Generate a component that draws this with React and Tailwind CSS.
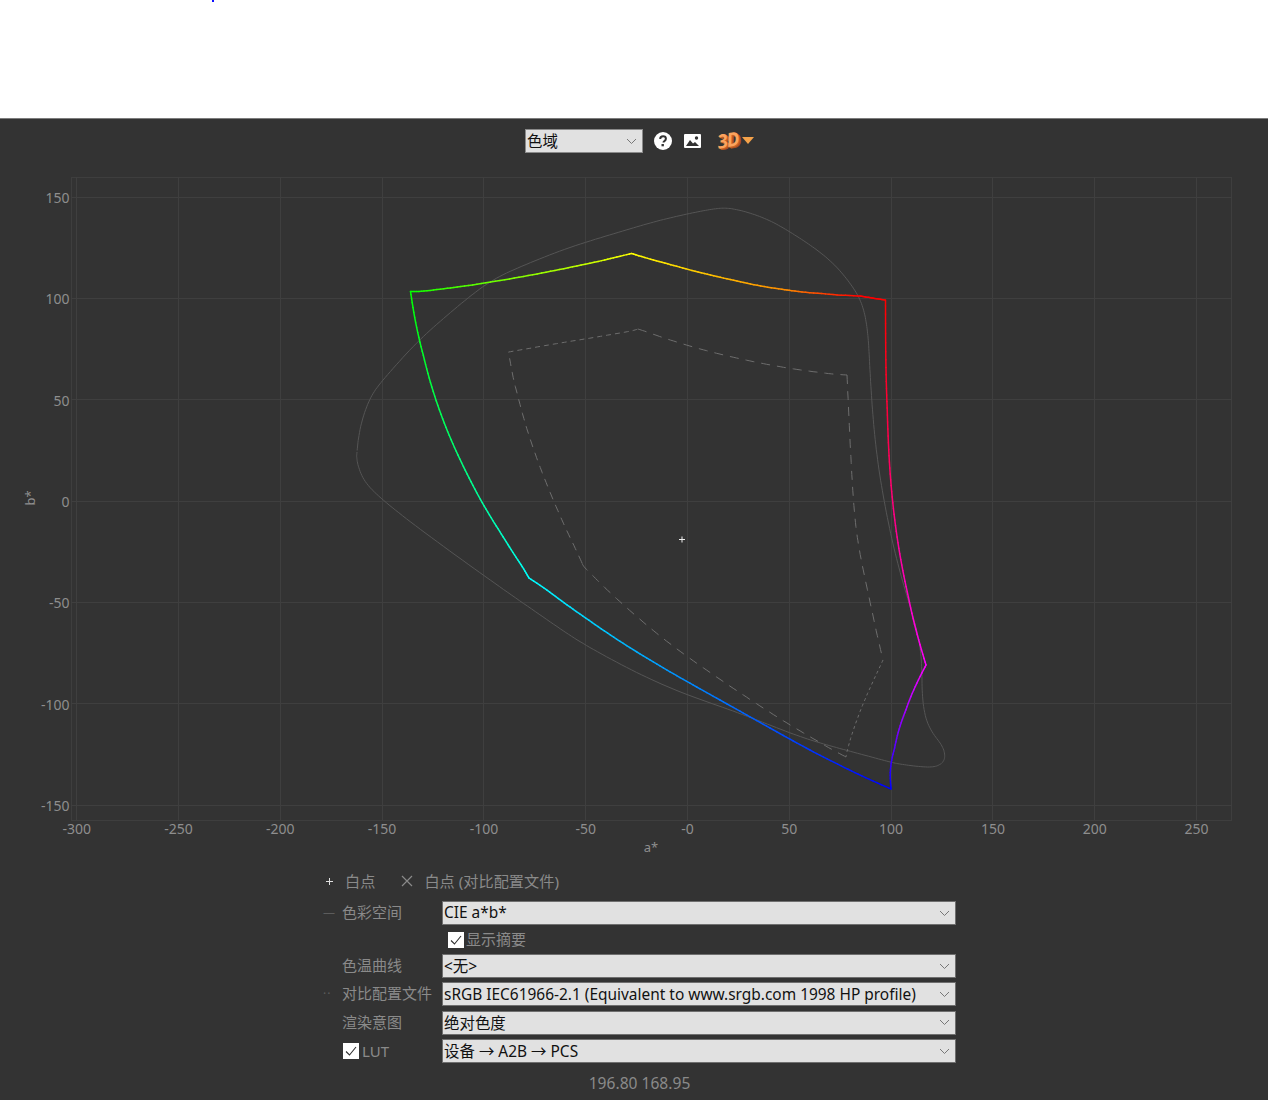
import React from "react";

const FONT = "font-['Noto_Sans','Noto_Sans_CJK_SC',sans-serif]";

const xTicks = [-300, -250, -200, -150, -100, -50, 0, 50, 100, 150, 200, 250];
const yTicks = [150, 100, 50, 0, -50, -100, -150];
const toX = (a) => 687.5 + a * 2.036;
const toY = (b) => 501.2 - b * 2.026;
const crisp = (v) => Math.floor(v) + 0.5;

// catmull-rom, sampled so every little piece can get its own colour
const spline = (pts, closed = false) => {
  const out = [];
  const n = pts.length;
  const get = (i) =>
    closed ? pts[(i + n) % n] : pts[Math.max(0, Math.min(n - 1, i))];
  const last = closed ? n : n - 1;
  for (let i = 0; i < last; i++) {
    const [p0, p1, p2, p3] = [get(i - 1), get(i), get(i + 1), get(i + 2)];
    for (let s = 0; s < 10; s++) {
      const t = s / 10;
      const t2 = t * t;
      const t3 = t2 * t;
      out.push(
        [0, 1].map(
          (k) =>
            0.5 *
            (2 * p1[k] +
              (p2[k] - p0[k]) * t +
              (2 * p0[k] - 5 * p1[k] + 4 * p2[k] - p3[k]) * t2 +
              (3 * p1[k] - p0[k] - 3 * p2[k] + p3[k]) * t3)
        )
      );
    }
  }
  out.push(closed ? pts[0] : pts[n - 1]);
  return out;
};

// moving average over the samples, the control points were read off by eye
const smooth = (line, r = 10, closed = false) => {
  const n = line.length;
  return line.map((_, i) => {
    const w = closed ? r : Math.min(r, i, n - 1 - i);
    let x = 0;
    let y = 0;
    for (let j = -w; j <= w; j++) {
      const p = line[(i + j + n) % n];
      x += p[0];
      y += p[1];
    }
    return [x / (2 * w + 1), y / (2 * w + 1)];
  });
};

const toPath = (pts) =>
  pts.map((p, i) => `${i ? "L" : "M"}${p[0].toFixed(1)} ${p[1].toFixed(1)}`).join(" ");

const Edge = ({ pts, from, to }) => {
  const line = smooth(spline(pts), 14);
  return line.slice(1).map((p, i) => {
    const t = i / (line.length - 2);
    const c = from.map((v, k) => Math.round(v + (to[k] - v) * t));
    return (
      <line
        key={i}
        x1={line[i][0]}
        y1={line[i][1]}
        x2={p[0]}
        y2={p[1]}
        stroke={`rgb(${c.join(",")})`}
        strokeWidth="1.5"
        strokeLinecap="round"
      />
    );
  });
};

const RED = [255, 0, 0];
const GREEN = [0, 255, 0];
const BLUE = [0, 0, 255];
const YELLOW = [255, 255, 0];
const ORANGE = [255, 140, 0];
const CYAN = [0, 255, 255];
const MAGENTA = [255, 0, 255];

const outer = [
  [357, 453], [360, 427], [370, 398], [383, 380], [417, 342], [450, 313],
  [487, 283], [520, 267], [570, 247], [620, 232], [653, 222], [687, 214],
  [713, 209], [727, 208], [743, 211], [767, 219], [790, 232], [813, 247],
  [833, 263], [850, 283], [862, 303], [867, 327], [869, 350], [871, 390],
  [875, 440], [882, 490], [893, 545], [905, 590], [917, 630], [922, 663],
  [922, 697], [928, 727], [941, 743], [945.5, 757], [940, 765], [927, 767.5],
  [900, 764], [890, 762], [853, 752], [820, 743], [787, 732], [737, 712],
  [687, 695], [637, 673], [587, 646], [562, 630], [523, 603], [483, 575],
  [417, 527], [383, 500], [363, 480], [357, 460],
];

const dashed = [
  { pts: [[508.5, 352], [540, 346.5], [580, 339.5], [623, 333], [638, 329]], dash: "5 4" },
  { pts: [[638, 329], [653, 334], [687, 346], [720, 354], [753, 362], [787, 368], [820, 373], [847, 375]], dash: "9 7" },
  { pts: [[847, 375], [850, 440], [853, 500], [857, 540], [863, 568], [873, 617], [883, 660]], dash: "9 7" },
  { pts: [[883, 660], [870, 688], [857, 717], [848, 747], [846, 757]], dash: "3 3" },
  { pts: [[846, 757], [820, 743], [787, 723], [753, 702], [720, 679], [687, 657], [653, 631], [620, 602], [588, 572], [582, 563]], dash: "9 7" },
  { pts: [[582, 563], [570, 537], [550, 495], [530, 440], [517, 397], [508.5, 352]], dash: "8 6" },
];

const Chart = () => (
  <svg viewBox="0 170 1268 695" className="block w-full h-[695px]">
    <rect x="71.5" y="177.5" width="1160" height="643" fill="none" stroke="#3e3e3e" />
    {xTicks.map((a) => (
      <g key={a}>
        <line x1={crisp(toX(a))} x2={crisp(toX(a))} y1="177" y2="820" stroke="#3f3f3f" />
        <text x={toX(a)} y="834" textAnchor="middle" fontSize="14" fill="#8e8e8e">
          {a === 0 ? "-0" : a}
        </text>
      </g>
    ))}
    {yTicks.map((b) => (
      <g key={b}>
        <line x1="71" x2="1232" y1={crisp(toY(b))} y2={crisp(toY(b))} stroke="#3f3f3f" />
        <text x="69.5" y={toY(b) + 5.8} textAnchor="end" fontSize="14" fill="#8e8e8e">
          {b}
        </text>
      </g>
    ))}
    <text x="651" y="852" textAnchor="middle" fontSize="13" fill="#8e8e8e">a*</text>
    <text
      transform="translate(35 498) rotate(-90)"
      textAnchor="middle"
      fontSize="13"
      fill="#8e8e8e"
    >
      b*
    </text>

    <path d={toPath(smooth(spline(outer, true), 6, true))} fill="none" stroke="#555" strokeWidth="1" />
    {dashed.map((d, i) => (
      <path
        key={i}
        d={toPath(smooth(spline(d.pts), 10))}
        fill="none"
        stroke="#6e6e6e"
        strokeWidth="1"
        strokeDasharray={d.dash}
      />
    ))}

    <Edge pts={[[410.5, 291.5], [430, 291], [467, 286], [507, 280], [570, 268], [600, 261], [631.5, 253.5]]} from={GREEN} to={YELLOW} />
    <Edge pts={[[631.5, 253.5], [660, 262], [687, 269], [720, 278], [753, 285], [787, 290]]} from={YELLOW} to={ORANGE} />
    <Edge pts={[[787, 290], [820, 294], [860, 296]]} from={ORANGE} to={RED} />
    <Edge pts={[[860, 296], [872, 298], [885, 300]]} from={RED} to={RED} />
    <Edge pts={[[885.5, 300], [886, 390], [888, 450], [892, 510], [900, 565], [913, 620], [926, 665]]} from={RED} to={MAGENTA} />
    <Edge pts={[[926, 665], [910, 697], [897, 730], [890, 760], [891, 789]]} from={MAGENTA} to={BLUE} />
    <Edge pts={[[891, 789], [853, 772], [820, 756], [787, 738], [753, 718], [720, 700], [687, 682], [653, 662], [620, 642], [587, 620], [560, 599], [529, 578]]} from={BLUE} to={CYAN} />
    <Edge pts={[[529, 578], [517, 558], [500, 533], [482, 503], [465, 473], [443, 423], [430, 387], [418, 337], [410.5, 291.5]]} from={CYAN} to={GREEN} />

    <path d="M679 539.5h6M682 536.5v6" stroke="#f0f0f0" strokeWidth="1" />
  </svg>
);

const Chevron = () => (
  <svg width="11" height="7" viewBox="0 0 11 7" className="shrink-0">
    <path d="M1 1l4.5 4.5L10 1" fill="none" stroke="#777" strokeWidth="1" />
  </svg>
);

const Select = ({ value, latin, className = "" }) => (
  <div
    className={`flex items-center justify-between border border-[#6f6f6f] bg-[#e1e1e1] pl-[1px] pr-[5px] text-[#111] text-[15.45px] leading-none whitespace-nowrap ${className}`}
  >
    <span className={latin ? "" : "pt-[2px]"}>{value}</span>
    <Chevron />
  </div>
);

const CheckBox = () => (
  <span className="flex h-4 w-4 shrink-0 items-center justify-center bg-white">
    <svg width="14" height="14" viewBox="0 0 14 14">
      <path d="M2 7.5l3.5 3.5L12 3" fill="none" stroke="#333" strokeWidth="1.1" />
    </svg>
  </span>
);

const Row = ({ mark, label, value, latin }) => (
  <div className="flex h-6 items-center">
    <span className="w-[19px] text-[#5c5c5c] text-[12px] tracking-[1px] leading-none">{mark}</span>
    <span className="w-[100px] pb-[2px] text-[15px]">{label}</span>
    <Select value={value} latin={latin} className="w-[514px] h-6" />
  </div>
);

export default function App() {
  return (
    <div className={`${FONT} w-full h-[1100px] overflow-hidden bg-[#333333] text-[#8a8a8a]`}>
      <div className="relative h-[118px] bg-white">
        <span className="absolute left-[212px] top-0 h-[2px] w-[2px] bg-[#1010ff]" />
      </div>
      <div className="flex h-[52px] border-t border-[#7c7c7c] pt-[10px] pl-[525px] items-start">
        <Select value="色域" className="w-[118px] h-6 border-[#8a8a8a]" />
        <svg width="18" height="18" viewBox="0 0 18 18" className="ml-[11px] mt-[3px]">
          <circle cx="9" cy="9" r="9" fill="#fff" />
          <path
            d="M6.2 7c0-1.7 1.2-2.7 2.9-2.7 1.6 0 2.8 1 2.8 2.4 0 1.2-.7 1.8-1.5 2.4-.6.4-.9.7-.9 1.4"
            fill="none"
            stroke="#333"
            strokeWidth="2"
          />
          <rect x="7.5" y="12" width="2.4" height="2.3" fill="#333" />
        </svg>
        <svg width="17" height="14" viewBox="0 0 17 14" className="ml-[12px] mt-[5px]">
          <rect width="17" height="14" rx="1" fill="#fff" />
          <circle cx="12.5" cy="4" r="1.7" fill="#333" />
          <path d="M2 12l4-6 3 3.5 2-1.5 4 4z" fill="#333" />
        </svg>
        <span className="ml-[16px] mt-[-1px] w-[21px] -rotate-[10deg] text-[19px] font-bold italic leading-[24px] tracking-[-1px] text-[#fba35e] [text-shadow:1px_1px_0_#c9662a,2px_2px_0_#a9521f]">
          3D
        </span>
        <svg width="12" height="7" viewBox="0 0 12 7" className="ml-[4px] mt-[8px]">
          <path d="M0 0h12L6 7z" fill="#f5a24a" />
        </svg>
      </div>

      <Chart />

      <div className="ml-[323px] mt-[4px] w-[633px]">
        <div className="flex h-6 items-center text-[15.2px]">
          <svg width="7" height="7" viewBox="0 0 7 7" className="ml-[3px]">
            <path d="M0 3.5h7M3.5 0v7" stroke="#e0e0e0" strokeWidth="1" />
          </svg>
          <span className="ml-[12px]">白点</span>
          <svg width="12" height="12" viewBox="0 0 12 12" className="ml-[26px]">
            <path d="M1 1l10 10M11 1L1 11" stroke="#8a8a8a" strokeWidth="1.2" />
          </svg>
          <span className="ml-[11px]">白点 (对比配置文件)</span>
        </div>
        <div className="mt-[8px]">
          <Row mark="—" label="色彩空间" value="CIE a*b*" latin />
        </div>
        <div className="flex h-[29px] items-center pl-[125px] text-[15px]">
          <CheckBox />
          <span className="ml-[2px]">显示摘要</span>
        </div>
        <div className="flex flex-col gap-[4.4px]">
          <Row label="色温曲线" value="<无>" />
          <Row mark="··" label="对比配置文件" value="sRGB IEC61966-2.1 (Equivalent to www.srgb.com 1998 HP profile)" latin />
          <Row label="渲染意图" value="绝对色度" />
          <div className="flex h-6 items-center">
            <span className="ml-[20px] flex w-[99px] items-center text-[15px]">
              <CheckBox />
              <span className="ml-[3px]">LUT</span>
            </span>
            <Select value="设备 → A2B → PCS" className="w-[514px] h-6" />
          </div>
        </div>
      </div>
      <div className="mt-[10px] text-center text-[15.6px] leading-5 pl-[11px]">196.80 168.95</div>
    </div>
  );
}
